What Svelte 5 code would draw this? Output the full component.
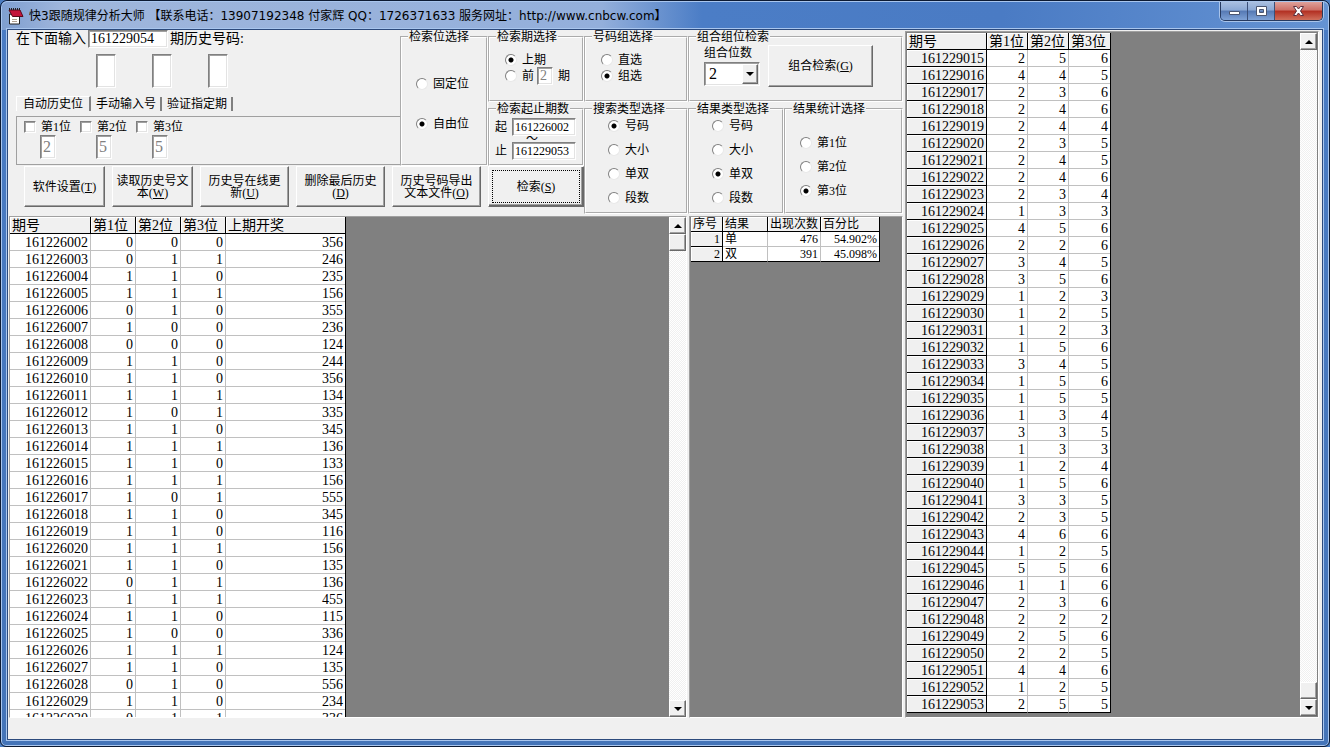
<script>
  const PREV = [
    "000356", "011246", "110235", "111156", "010355", "100236", "000124", "110244",
    "110356", "111134", "101335", "110345", "111136", "110133", "111156", "101555",
    "110345", "110116", "111156", "110135", "011136", "111455", "110115", "100336",
    "111124", "110135", "010556", "110234", "011336",
  ];

  const DRAWS = [
    "256", "445", "236", "246", "244", "235", "245", "246", "234", "133", "456", "226", "345",
    "356", "123", "125", "123", "156", "345", "156", "155", "134", "335", "133", "124", "156",
    "335", "235", "466", "125", "556", "116", "236", "222", "256", "225", "446", "125", "255",
  ];

  const positions = ["第1位", "第2位", "第3位"];

  const followRows = PREV.map((s, i) => ({
    issue: 161226002 + i,
    hits: s.slice(0, 3).split(""),
    last: s.slice(3),
  }));

  const drawRows = DRAWS.map((s, i) => ({ issue: 161229015 + i, balls: s.split("") }));

  const stats = [
    { result: "单", count: 476, percent: "54.902%" },
    { result: "双", count: 391, percent: "45.098%" },
  ];

  const actions = [
    { label: "软件设置", key: "T" },
    { label: "读取历史号文本", key: "W" },
    { label: "历史号在线更新", key: "U" },
    { label: "删除最后历史", key: "D" },
    { label: "历史号码导出文本文件", key: "O" },
  ];

  const kinds = ["号码", "大小", "单双", "段数"];

  let nextIssue = $state("161229054");
  let balls = $state(["", "", ""]);
  let autoBalls = $state(["2", "5", "5"]);
  let activeTab = $state(0);
  let place = $state("自由位");
  let period = $state("上期");
  let order = $state("组选");
  let searchKind = $state("号码");
  let resultKind = $state("单双");
  let statPlace = $state("第3位");
  let from = $state("161226002");
  let to = $state("161229053");
  let size = $state("2");
</script>

{#snippet scrollbar(name, atEnd)}
  <div class="scrollbar">
    <button type="button" class="raised" aria-label={`${name} 向上滚动`}>
      <svg width="8" height="4" viewBox="0 0 8 4"><path d="M4 0 8 4H0z" /></svg>
    </button>
    <div class="track" class:end={atEnd}><div class="thumb raised"></div></div>
    <button type="button" class="raised" aria-label={`${name} 向下滚动`}>
      <svg width="8" height="4" viewBox="0 0 8 4"><path d="M0 0H8L4 4z" /></svg>
    </button>
  </div>
{/snippet}

<div class="window">
  <header class="titlebar">
    <svg class="logo" width="16" height="17" viewBox="0 0 16 17" aria-hidden="true">
      <path d="M1.500 6v10h10V8z" fill="#fff" stroke="#222" />
      <path d="M1 2h11l3 6.500H4.500z" fill="#c4143a" stroke="#5a0a1c" />
      <path d="M1.500 2V0M3.500 2V0M5.500 2V0M7.500 2V0M9.500 2V0M11.500 2V0" stroke="#222" />
      <path d="M4 11.500h5M4 13.500h5" stroke="#b0a090" />
    </svg>
    <h1>快3跟随规律分析大师 【联系电话：13907192348 付家辉 QQ：1726371633 服务网址：http://www.cnbcw.com】</h1>
    <div class="caption-buttons">
      <button type="button" aria-label="最小化">
        <svg width="13" height="12" viewBox="0 0 13 12"><path d="M1.500 6.500h10v3h-10z" fill="#fff" stroke="#4a5570" /></svg>
      </button>
      <button type="button" aria-label="最大化">
        <svg width="13" height="12" viewBox="0 0 13 12"><path d="M1.500 1.500h10v9h-10zM4.500 4.500h4v3h-4z" fill="#fff" fill-rule="evenodd" stroke="#4a5570" /></svg>
      </button>
      <button type="button" class="close" aria-label="关闭">
        <svg width="13" height="12" viewBox="0 0 13 12"><path d="M1.500 1.500h3l2 2.500 2-2.500h3L8.500 6l3 4.500h-3l-2-2.500-2 2.500h-3L4.500 6z" fill="#fff" stroke="#5a3040" /></svg>
      </button>
    </div>
  </header>

  <main>
    <section class="left">
      <form class="controls" onsubmit={(e) => e.preventDefault()}>
        <div class="primary">
          <div class="upper">
            <div class="entry">
              <div class="issue">
                <label for="next-issue">在下面输入</label>
                <input id="next-issue" class="sunken" bind:value={nextIssue} />
                <span>期历史号码:</span>
              </div>
              <div class="balls">
                {#each balls as _, i}
                  <input class="sunken" aria-label={`${positions[i]}号码`} bind:value={balls[i]} />
                {/each}
              </div>
              <div class="tabs" role="tablist">
                {#each ["自动历史位", "手动输入号", "验证指定期"] as tab, i}
                  <button
                    type="button"
                    role="tab"
                    class:active={activeTab === i}
                    aria-selected={activeTab === i}
                    onclick={() => (activeTab = i)}>{tab}</button
                  >
                {/each}
              </div>
              <div class="auto">
                {#each positions as pos, i}
                  <div class="auto-item">
                    <label><input type="checkbox" class="sunken" />{pos}</label>
                    <input class="sunken" aria-label={`${pos}历史`} disabled bind:value={autoBalls[i]} />
                  </div>
                {/each}
              </div>
            </div>

            <fieldset class="place">
              <legend>检索位选择</legend>
              <div class="body">
                {#each ["固定位", "自由位"] as p}
                  <label><input type="radio" name="place" value={p} bind:group={place} />{p}</label>
                {/each}
              </div>
            </fieldset>

            <div class="periods">
              <fieldset class="pair">
                <legend>检索期选择</legend>
                <div class="body">
                  <label><input type="radio" name="period" value="上期" bind:group={period} />上期</label>
                  <div class="nth">
                    <label><input type="radio" name="period" value="前" bind:group={period} />前</label>
                    <input class="sunken" aria-label="前几期" value="2" disabled />
                    <span>期</span>
                  </div>
                </div>
              </fieldset>
              <fieldset class="range">
                <legend>检索起止期数</legend>
                <div class="body">
                  <label for="from">起</label>
                  <input id="from" class="sunken" bind:value={from} />
                  <span>～</span>
                  <label for="to">止</label>
                  <input id="to" class="sunken" bind:value={to} />
                </div>
              </fieldset>
            </div>
          </div>

          <div class="actions">
            {#each actions as a}
              <button type="button" class="raised">{a.label}<span class="key">(<u>{a.key}</u>)</span></button>
            {/each}
            <button type="submit" class="raised default">
              <span class="focus">检索<span class="key">(<u>S</u>)</span></span>
            </button>
          </div>
        </div>

        <div class="options">
          <div class="option-row">
            <fieldset class="pair">
              <legend>号码组选择</legend>
              <div class="body">
                {#each ["直选", "组选"] as o}
                  <label><input type="radio" name="order" value={o} bind:group={order} />{o}</label>
                {/each}
              </div>
            </fieldset>
            <fieldset class="combo">
              <legend>组合组位检索</legend>
              <div class="body">
                <div class="combo-size">
                  <label for="size">组合位数</label>
                  <div class="select sunken">
                    <select id="size" bind:value={size}>
                      <option>2</option>
                      <option>3</option>
                    </select>
                    <span class="raised">
                      <svg width="8" height="4" viewBox="0 0 8 4"><path d="M0 0H8L4 4z" /></svg>
                    </span>
                  </div>
                </div>
                <button type="button" class="raised">组合检索<span class="key">(<u>G</u>)</span></button>
              </div>
            </fieldset>
          </div>
          <div class="option-row three">
            <fieldset class="kinds">
              <legend>搜索类型选择</legend>
              <div class="body">
                {#each kinds as k}
                  <label><input type="radio" name="search-kind" value={k} bind:group={searchKind} />{k}</label>
                {/each}
              </div>
            </fieldset>
            <fieldset class="kinds">
              <legend>结果类型选择</legend>
              <div class="body">
                {#each kinds as k}
                  <label><input type="radio" name="result-kind" value={k} bind:group={resultKind} />{k}</label>
                {/each}
              </div>
            </fieldset>
            <fieldset class="kinds stat">
              <legend>结果统计选择</legend>
              <div class="body">
                {#each positions as p}
                  <label><input type="radio" name="stat-place" value={p} bind:group={statPlace} />{p}</label>
                {/each}
              </div>
            </fieldset>
          </div>
        </div>
      </form>

      <div class="results">
        <div class="pane follow">
          <div class="view">
            <table>
              <colgroup><col class="w-issue" /><col class="w-hit" span="3" /><col class="w-last" /></colgroup>
              <thead>
                <tr>
                  <th>期号</th>
                  {#each positions as p}<th>{p}</th>{/each}
                  <th>上期开奖</th>
                </tr>
              </thead>
              <tbody>
                {#each followRows as row}
                  <tr>
                    <td>{row.issue}</td>
                    {#each row.hits as hit}<td>{hit}</td>{/each}
                    <td>{row.last}</td>
                  </tr>
                {/each}
              </tbody>
            </table>
          </div>
          {@render scrollbar("检索结果", false)}
        </div>

        <div class="pane summary">
          <div class="view">
            <table class="small">
              <colgroup><col class="w-no" /><col class="w-result" /><col class="w-count" /><col class="w-percent" /></colgroup>
              <thead>
                <tr><th>序号</th><th>结果</th><th>出现次数</th><th>百分比</th></tr>
              </thead>
              <tbody>
                {#each stats as s, i}
                  <tr>
                    <th scope="row">{i + 1}</th>
                    <td class="text">{s.result}</td>
                    <td>{s.count}</td>
                    <td>{s.percent}</td>
                  </tr>
                {/each}
              </tbody>
            </table>
          </div>
        </div>
      </div>
    </section>

    <section class="pane history">
      <div class="view">
        <table>
          <colgroup><col class="w-draw" /><col class="w-ball" span="3" /></colgroup>
          <thead>
            <tr>
              <th>期号</th>
              {#each positions as p}<th>{p}</th>{/each}
            </tr>
          </thead>
          <tbody>
            {#each drawRows as row}
              <tr>
                <th scope="row">{row.issue}</th>
                {#each row.balls as ball}<td>{ball}</td>{/each}
              </tr>
            {/each}
          </tbody>
        </table>
      </div>
      {@render scrollbar("历史号码", true)}
    </section>
  </main>
</div>

<style>
  :global(body) {
    background: #4a7cc0;
  }

  .window,
  .window * {
    box-sizing: border-box;
  }

  .window {
    display: flex;
    flex-direction: column;
    height: 100vh;
    padding: 0 7px 7px;
    border: 1px solid #0c1a33;
    border-radius: 7px 7px 6px 6px;
    background: linear-gradient(#4a7cc4, #4474b8);
    box-shadow: inset 0 0 0 1px #a9c6ee;
    color: #000;
    font: 12px/14px "Liberation Serif", "Noto Sans CJK SC", serif;
    font-kerning: none;
  }

  button,
  input,
  select {
    margin: 0;
    padding: 0;
    border: 0;
    border-radius: 0;
    color: inherit;
    font: inherit;
    font-kerning: none;
  }

  button {
    background: #f0f0f0;
  }

  .key {
    white-space: nowrap;
  }

  .titlebar {
    display: flex;
    align-items: center;
    height: 29px;
    flex: none;
    margin: 0 -6px;
    padding: 0 5px 0 6px;
    border-top: 1px solid #a9c6ee;
    border-radius: 6px 6px 0 0;
    background: linear-gradient(90deg, #7f9fd0 0, #9fb6dc 60px, #93afdb 600px, #4b7dc6 700px, #4a7bc4 1000px, #6593d3 100%);
  }

  .logo {
    flex: none;
    margin-right: 5px;
  }

  h1 {
    flex: 1;
    margin: 0;
    overflow: hidden;
    font: 12px/20px "DejaVu Sans", "Noto Sans CJK SC", sans-serif;
    text-spacing-trim: space-all;
    white-space: nowrap;
  }

  .caption-buttons {
    display: flex;
    align-self: flex-start;
    height: 19px;
    border: 1px solid #263a60;
    border-top: 0;
    border-radius: 0 0 5px 5px;
    overflow: hidden;
    box-shadow: 0 0 0 1px #a9c4ea;
  }

  .caption-buttons button {
    display: flex;
    align-items: center;
    justify-content: center;
    width: 27px;
    border-right: 1px solid #3a4f78;
    background: linear-gradient(#a9bfe0 0, #8ba8d4 45%, #5579b4 50%, #7fa2d6 100%);
  }

  .caption-buttons .close {
    width: 47px;
    border-right: 0;
    background: linear-gradient(#dfa19b 0, #cd6f66 45%, #b22f22 50%, #d0705c 100%);
  }

  main {
    display: grid;
    grid-template-columns: minmax(0, 896fr) minmax(0, 418fr);
    flex: 1;
    min-height: 0;
    padding-bottom: 21px;
    background: #f0f0f0;
    box-shadow: 0 0 0 1px #2c4a7c, 0 0 0 2px #a9c6ee;
  }

  .left {
    display: flex;
    flex-direction: column;
    min-height: 0;
  }

  .controls {
    display: grid;
    grid-template-columns: minmax(0, 576fr) minmax(0, 319fr);
    height: 186px;
    padding-right: 1px;
    flex: none;
  }

  .primary,
  .options,
  .periods {
    display: flex;
    flex-direction: column;
    min-width: 0;
  }

  .upper {
    display: flex;
    height: 136px;
  }

  .entry {
    flex: 1;
    min-width: 0;
    padding-left: 8px;
  }

  fieldset {
    min-width: 0;
    margin: 0;
    padding: 0;
    border: 2px groove #fff;
  }

  legend {
    margin-left: 6px;
    padding: 0 1px;
    line-height: 14px;
    white-space: nowrap;
  }

  fieldset label {
    display: flex;
    align-items: center;
    gap: 5px;
    height: 16px;
    white-space: nowrap;
  }

  .sunken {
    border: 1px solid;
    border-color: #808080 #fff #fff #808080;
    background: #fff;
    box-shadow: inset 1px 1px 0 #a0a0a0, inset -1px -1px 0 #e3e3e3;
  }

  .raised {
    border: 1px solid;
    border-color: #fff #696969 #696969 #fff;
    background: #f0f0f0;
    box-shadow: inset -1px -1px 0 #a0a0a0;
  }

  input[type="radio"],
  input[type="checkbox"] {
    appearance: none;
    flex: none;
    width: 12px;
    height: 12px;
  }

  input[type="radio"] {
    border: 1px solid;
    border-color: #808080 #e8e8e8 #e8e8e8 #808080;
    border-radius: 50%;
    background: #fff;
  }

  input[type="radio"]:checked {
    background: radial-gradient(circle, #000 0 2px, #fff 3px);
  }

  input:disabled {
    color: #808080;
  }

  .issue {
    display: flex;
    align-items: center;
    gap: 2px;
    height: 18px;
    font-size: 14px;
    white-space: nowrap;
  }

  .issue input {
    width: 80px;
    height: 18px;
    padding-left: 2px;
  }

  .balls {
    display: flex;
    gap: 36px;
    margin: 6px 0 7px 80px;
  }

  .balls input {
    width: 20px;
    height: 34px;
  }

  .tabs {
    display: flex;
    align-items: flex-end;
    gap: 1px;
    height: 16px;
  }

  .tabs button {
    height: 14px;
    padding: 0 4px;
    border-right: 2px solid #808080;
    line-height: 14px;
    white-space: nowrap;
  }

  .tabs .active {
    height: 15px;
    padding: 0 6px;
    border-top: 1px solid #fff;
    border-left: 1px solid #fff;
  }

  .auto {
    display: flex;
    height: 49px;
    margin-top: 5px;
    padding: 2px 0 0 7px;
    border: 1px solid #a0a0a0;
    border-right: 0;
  }

  .auto-item {
    width: 56px;
  }

  .auto-item label {
    display: flex;
    align-items: center;
    gap: 5px;
    height: 16px;
    white-space: nowrap;
  }

  .auto-item > input {
    display: block;
    width: 16px;
    height: 24px;
    margin-left: 16px;
    padding-left: 2px;
    font-size: 16px;
  }

  .place {
    width: 88px;
  }

  .place .body {
    display: grid;
    gap: 24px;
    padding: 32px 0 0 14px;
  }

  .periods {
    width: 96px;
  }

  .pair {
    height: 72px;
  }

  .pair .body {
    padding: 8px 0 0 15px;
  }

  .nth {
    display: flex;
    align-items: center;
    gap: 3px;
    height: 16px;
  }

  .nth input.sunken {
    width: 16px;
    height: 18px;
    margin-right: 2px;
    padding-left: 2px;
    font-size: 14px;
  }

  .range {
    height: 64px;
  }

  .range .body {
    display: grid;
    grid-template-columns: 17px 64px;
    grid-template-rows: 18px 6px 18px;
    align-items: center;
    padding: 2px 0 0 5px;
  }

  .range input {
    width: 64px;
    height: 18px;
    padding-left: 2px;
  }

  .range span {
    grid-column: 2;
    padding-left: 14px;
    line-height: 6px;
  }

  .actions {
    display: grid;
    grid-template-columns: 81fr 81fr 89fr 89fr 89fr 96fr;
    gap: 7px;
    height: 41px;
    padding-left: 16px;
  }

  .actions button {
    min-width: 0;
    padding: 0 2px;
    line-height: 12px;
  }

  .actions .default {
    padding: 3px;
    box-shadow: inset -1px -1px 0 #696969, inset -2px -2px 0 #a0a0a0;
  }

  .focus {
    display: flex;
    align-items: center;
    justify-content: center;
    height: 100%;
    border: 1px dotted #000;
  }

  .option-row {
    display: grid;
    grid-template-columns: minmax(0, 104fr) minmax(0, 215fr);
  }

  .three {
    grid-template-columns: minmax(0, 104fr) minmax(0, 96fr) minmax(0, 119fr);
  }

  .combo .body {
    display: flex;
    gap: 8px;
    padding: 1px 0 0 14px;
  }

  .combo-size label {
    height: 16px;
    margin-bottom: 1px;
  }

  .select {
    position: relative;
    width: 56px;
    height: 24px;
  }

  .select select {
    appearance: none;
    width: 100%;
    height: 100%;
    padding-left: 4px;
    background: transparent;
    font-size: 16px;
  }

  .select span {
    position: absolute;
    top: 1px;
    right: 1px;
    bottom: 1px;
    display: flex;
    align-items: center;
    justify-content: center;
    width: 16px;
    pointer-events: none;
  }

  .combo button {
    width: 105px;
    height: 42px;
  }

  .kinds {
    height: 112px;
  }

  .kinds .body {
    display: grid;
    gap: 8px;
    padding: 2px 0 0 22px;
  }

  .stat .body {
    padding: 19px 0 0 14px;
  }

  .results {
    display: grid;
    grid-template-columns: minmax(0, 678fr) minmax(0, 214fr);
    gap: 2px;
    flex: 1;
    min-height: 0;
    padding: 0 1px;
  }

  .pane {
    display: flex;
    min-height: 0;
    border: 1px solid;
    border-color: #a0a0a0 #fff #fff #a0a0a0;
    background: #808080;
    overflow: hidden;
  }

  .view {
    flex: 1;
    min-width: 0;
    overflow: hidden;
  }

  .history {
    margin: 1px 3px 0 1px;
    padding: 1px;
  }

  .summary {
    padding-left: 1px;
  }

  table {
    border-collapse: separate;
    border-spacing: 0;
    table-layout: fixed;
    width: 0;
    border-right: 1px solid #000;
    font-size: 14px;
    line-height: 14px;
  }

  .small {
    font-size: 12px;
    line-height: 13px;
  }

  .w-issue { width: 81px; }
  .w-hit { width: 45px; }
  .w-last { width: 119px; }
  .w-no { width: 32px; }
  .w-result { width: 45px; }
  .w-count { width: 53px; }
  .w-percent { width: 58px; }
  .w-draw { width: 80px; }
  .w-ball { width: 41px; }

  th,
  td {
    height: 17px;
    padding: 2px 2px 0;
    overflow: hidden;
    border-right: 1px solid #c0c0c0;
    border-bottom: 1px solid #c0c0c0;
    background: #fff;
    font-weight: normal;
    text-align: right;
    white-space: nowrap;
  }

  .small th,
  .small td {
    height: 15px;
    padding-top: 1px;
  }

  th {
    border-color: #000;
    background: #f0f0f0;
    box-shadow: inset 1px 1px 0 #fff;
  }

  thead th,
  .text {
    text-align: left;
  }

  tr > :last-child {
    border-right: 0;
  }

  .small tr:last-child td,
  .history tr:last-child td {
    border-bottom-color: #000;
  }

  .scrollbar {
    display: flex;
    flex-direction: column;
    flex: none;
    width: 17px;
  }

  .scrollbar button {
    display: flex;
    align-items: center;
    justify-content: center;
    width: 17px;
    height: 17px;
    flex: none;
  }

  .track {
    display: flex;
    flex: 1;
    flex-direction: column;
    background: repeating-conic-gradient(#fff 0 25%, #f0f0f0 0 50%) 0 0 / 2px 2px;
  }

  .track.end {
    justify-content: flex-end;
  }

  .thumb {
    height: 17px;
  }
</style>
